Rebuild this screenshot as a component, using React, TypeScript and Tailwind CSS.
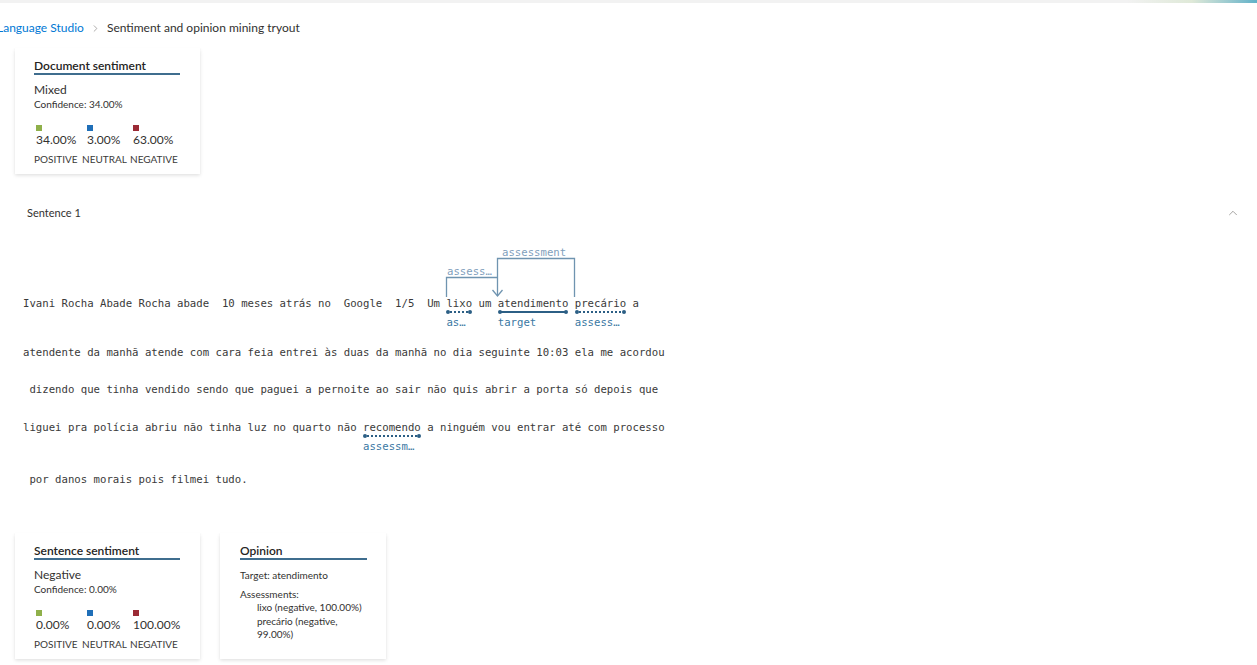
import React from "react";
import { ChevronRight, ChevronUp } from "lucide-react";

const mono = "font-['DejaVu_Sans_Mono',monospace] text-[10.66px] text-[#3a3a3a]";

function Underline({ dotted }: { dotted?: boolean }) {
  return (
    <div className="relative h-[2px] mx-px">
      <div
        className={
          dotted
            ? "h-[2px] border-t-2 border-dotted border-[#2c5f85]"
            : "h-[2px] bg-[#2c5f85]"
        }
      />
      <span className="absolute -left-px -top-[1px] w-[4px] h-[4px] rounded-full bg-[#2c5f85]" />
      <span className="absolute -right-px -top-[1px] w-[4px] h-[4px] rounded-full bg-[#2c5f85]" />
    </div>
  );
}

function Token({ text, label, dotted }: { text: string; label: string; dotted?: boolean }) {
  return (
    <span className="inline-flex flex-col">
      <span className="leading-[14px] whitespace-pre">{text}</span>
      <Underline dotted={dotted} />
      <span className="mt-[3px] leading-[13px] text-[#3a78a3] whitespace-pre">{label}</span>
    </span>
  );
}

function Plain({ text }: { text: string }) {
  return <span className="leading-[14px] whitespace-pre">{text}</span>;
}

function SentimentStats({ values }: { values: [string, string, string] }) {
  const cols = [
    { color: "bg-[#8fb04a]", label: "POSITIVE", pad: "pl-[2px]" },
    { color: "bg-[#1f6fb8]", label: "NEUTRAL", pad: "pl-[5px]" },
    { color: "bg-[#9b2a35]", label: "NEGATIVE", pad: "pl-[3px]" },
  ];
  return (
    <div className="grid grid-cols-[48px_48px_auto] mt-[14px]">
      {cols.map((c, i) => (
        <div key={c.label} className="flex flex-col">
          <div className={c.pad}>
            <div className={"w-[6px] h-[6px] " + c.color} />
            <div className="mt-[1px] text-[12px] leading-[16px] text-[#323130]">{values[i]}</div>
          </div>
          <div className="mt-[5px] text-[10px] leading-[12px] text-[#3b3a39]">{c.label}</div>
        </div>
      ))}
    </div>
  );
}

function SentimentCard({
  title,
  value,
  confidence,
  values,
}: {
  title: string;
  value: string;
  confidence: string;
  values: [string, string, string];
}) {
  return (
    <div className="w-[185px] h-[126px] bg-white pl-[19px] pt-[11px] shadow-[0_1.6px_3.6px_rgba(0,0,0,0.13),0_0.3px_0.9px_rgba(0,0,0,0.11)]">
      <div className="w-[146px] border-b-2 border-[#3f6d8e] text-[12px] leading-[14px] font-semibold text-[#252423]">
        {title}
      </div>
      <div className="mt-[8px] text-[12px] leading-[14px] text-[#323130]">{value}</div>
      <div className="mt-px text-[10px] leading-[13px] text-[#323130]">Confidence: {confidence}</div>
      <SentimentStats values={values} />
    </div>
  );
}

export default function App() {
  return (
    <div className="w-[1257px] h-[665px] overflow-hidden bg-white font-['Lato',sans-serif] text-[#323130]">
      {/* top strip */}
      <div className="flex h-[3px]">
        <div className="flex-1 bg-[#f2f2f2]" />
        <div className="w-[130px] bg-gradient-to-r from-[#f2f2f2] via-[#dfe9d8] to-[#5fb1c8]" />
      </div>

      {/* breadcrumb */}
      <div className="mt-[17px] -ml-[3px] flex items-center h-[16px] text-[12px] leading-[16px]">
        <span className="text-[#0078d4]">Language Studio</span>
        <ChevronRight className="mx-[6px] w-[11px] h-[11px] text-[#8a8886]" strokeWidth={1.5} />
        <span className="text-[#323130]">Sentiment and opinion mining tryout</span>
      </div>

      <div className="ml-[15px] mt-[12px]">
        <SentimentCard
          title="Document sentiment"
          value="Mixed"
          confidence="34.00%"
          values={["34.00%", "3.00%", "63.00%"]}
        />
      </div>

      {/* sentence header */}
      <div className="mt-[31px] flex items-center justify-between pl-[27px] pr-[17px] h-[16px]">
        <span className="text-[11px] leading-[16px] text-[#323130]">Sentence 1</span>
        <ChevronUp className="w-[14px] h-[14px] text-[#8a8886]" strokeWidth={1.3} />
      </div>

      {/* sentence text */}
      <div className={"ml-[23px] mt-[76px] " + mono}>
        <div className="relative flex items-start">
          <svg
            className="absolute left-0 top-[-45px] overflow-visible"
            width="560"
            height="47"
            fill="none"
            stroke="#6f94b0"
            strokeWidth="1.3"
          >
            <path d="M423.5 45 V25.5 H474.5" />
            <path d="M474.5 44 V6.5 H551.5 V45" />
            <path d="M469.5 38 L474.5 44 L479.5 38" />
          </svg>
          <span className="absolute left-[424px] top-[-31px] leading-[12px] text-[#7fa0bc]">assess…</span>
          <span className="absolute left-[479px] top-[-50px] leading-[12px] text-[#7fa0bc]">assessment</span>
          <Plain text="Ivani Rocha Abade Rocha abade  10 meses atrás no  Google  1/5  Um " />
          <Token text="lixo" label="as…" dotted />
          <Plain text=" um " />
          <Token text="atendimento" label="target" />
          <Plain text=" " />
          <Token text="precário" label="assess…" dotted />
          <Plain text=" a" />
        </div>
        <div className="mt-[17px] flex">
          <Plain text="atendente da manhã atende com cara feia entrei às duas da manhã no dia seguinte 10:03 ela me acordou" />
        </div>
        <div className="mt-[23px] flex">
          <Plain text=" dizendo que tinha vendido sendo que paguei a pernoite ao sair não quis abrir a porta só depois que" />
        </div>
        <div className="mt-[24px] flex items-start">
          <Plain text="liguei pra polícia abriu não tinha luz no quarto não " />
          <Token text="recomendo" label="assessm…" dotted />
          <Plain text=" a ninguém vou entrar até com processo" />
        </div>
        <div className="mt-[20px] flex">
          <Plain text=" por danos morais pois filmei tudo." />
        </div>
      </div>

      {/* bottom cards */}
      <div className="ml-[15px] mt-[46px] flex gap-[20px]">
        <SentimentCard
          title="Sentence sentiment"
          value="Negative"
          confidence="0.00%"
          values={["0.00%", "0.00%", "100.00%"]}
        />
        <div className="w-[166px] h-[126px] bg-white pl-[20px] pt-[11px] shadow-[0_1.6px_3.6px_rgba(0,0,0,0.13),0_0.3px_0.9px_rgba(0,0,0,0.11)]">
          <div className="w-[127px] border-b-2 border-[#3f6d8e] text-[12px] leading-[14px] font-semibold text-[#252423]">
            Opinion
          </div>
          <div className="mt-[9px] text-[10px] leading-[12px]">Target: atendimento</div>
          <div className="mt-[7px] text-[10px] leading-[12px]">Assessments:</div>
          <div className="pl-[17px] mt-px text-[10px] leading-[13.5px]">
            <div>lixo (negative, 100.00%)</div>
            <div>precário (negative,</div>
            <div>99.00%)</div>
          </div>
        </div>
      </div>
    </div>
  );
}
